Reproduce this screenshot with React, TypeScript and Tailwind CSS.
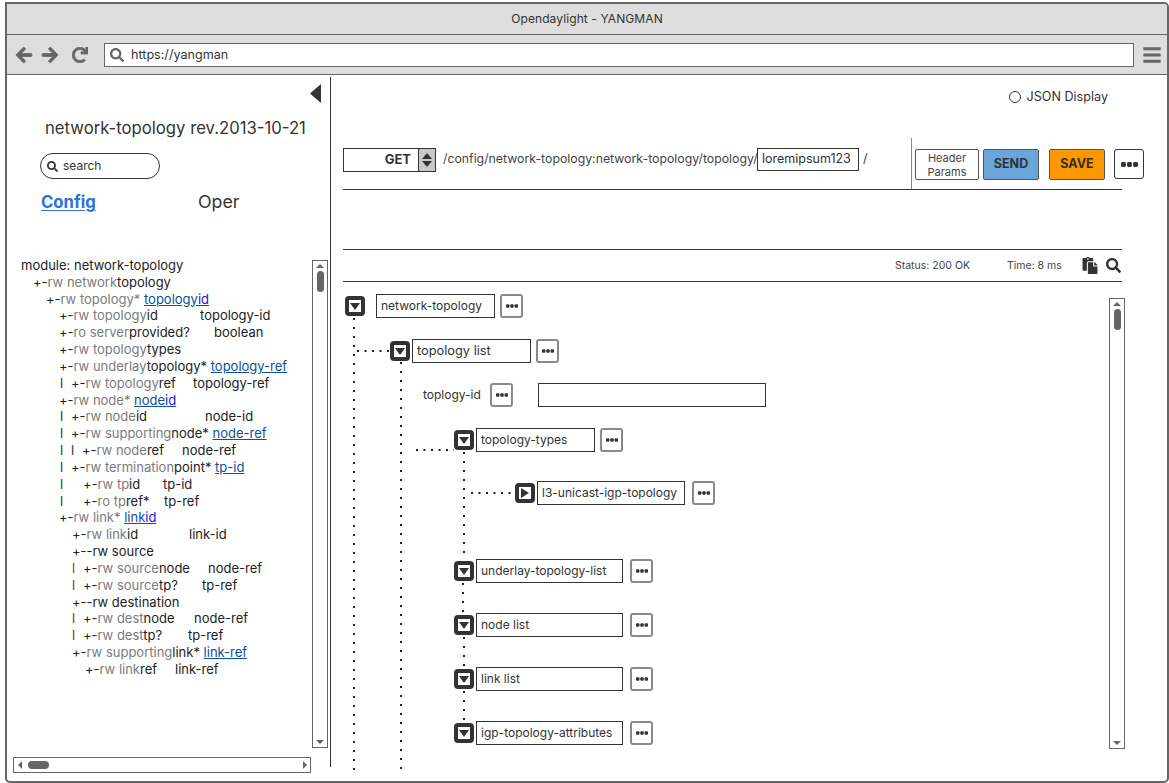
import React from "react";
import { FaArrowLeft, FaArrowRight, FaRedo, FaSearch, FaBars, FaPaste } from "react-icons/fa";

type Part = { t: string; k?: "g" | "b" | "l" | "d" };
type Line = { pad: string; w?: string; pipes?: React.ReactNode; parts: Part[]; col?: string };

const g = (t: string): Part => ({ t, k: "g" });
const b = (t: string): Part => ({ t, k: "b" });
const l = (t: string): Part => ({ t, k: "l" });
const d = (t: string): Part => ({ t, k: "d" });

const P1 = <span className="w-[11px] shrink-0">l</span>;
const P1w = <span className="w-[23px] shrink-0">l</span>;
const P2 = (
  <>
    <span className="w-[11px] shrink-0">l</span>
    <span className="w-[11px] shrink-0">l</span>
  </>
);
const PR = <span className="w-[11px] shrink-0 text-[#8a3030]">l</span>;

const lines: Line[] = [
  { pad: "pl-0", parts: [b("module: network-topology")] },
  { pad: "pl-[12px]", parts: [b("+-"), g("rw network"), b("topology")] },
  { pad: "pl-[25px]", parts: [b("+-"), g("rw topology* "), l("topology"), d("id")] },
  { pad: "pl-[38px]", w: "w-[179px]", parts: [b("+-"), g("rw topology"), b("id")], col: "topology-id" },
  { pad: "pl-[38px]", w: "w-[193px]", parts: [b("+-"), g("ro server"), b("provided?")], col: "boolean" },
  { pad: "pl-[38px]", parts: [b("+-"), g("rw topology"), b("types")] },
  { pad: "pl-[38px]", parts: [b("+-"), g("rw underlay"), b("topology* "), l("topology-ref")] },
  { pad: "pl-[39px]", w: "w-[172px]", pipes: P1, parts: [b("+-"), g("rw topology"), b("ref")], col: "topology-ref" },
  { pad: "pl-[38px]", parts: [b("+-"), g("rw node* "), l("node"), d("id")] },
  { pad: "pl-[39px]", w: "w-[184px]", pipes: P1, parts: [b("+-"), g("rw node"), b("id")], col: "node-id" },
  { pad: "pl-[39px]", pipes: P1, parts: [b("+-"), g("rw supporting"), b("node* "), l("node-ref")] },
  { pad: "pl-[39px]", w: "w-[161px]", pipes: P2, parts: [b("+-"), g("rw node"), b("ref")], col: "node-ref" },
  { pad: "pl-[39px]", pipes: P1, parts: [b("+-"), g("rw termination"), b("point* "), l("tp-id")] },
  { pad: "pl-[39px]", w: "w-[142px]", pipes: P1w, parts: [b("+-"), g("rw tp"), b("id")], col: "tp-id" },
  { pad: "pl-[39px]", w: "w-[143px]", pipes: P1w, parts: [b("+-"), g("ro tp"), b("ref*")], col: "tp-ref" },
  { pad: "pl-[38px]", parts: [b("+-"), g("rw link* "), l("link"), d("id")] },
  { pad: "pl-[51px]", w: "w-[168px]", parts: [b("+-"), g("rw link"), b("id")], col: "link-id" },
  { pad: "pl-[51px]", parts: [b("+--rw source")] },
  { pad: "pl-[51px]", w: "w-[187px]", pipes: PR, parts: [b("+-"), g("rw source"), b("node")], col: "node-ref" },
  { pad: "pl-[51px]", w: "w-[181px]", pipes: PR, parts: [b("+-"), g("rw source"), b("tp?")], col: "tp-ref" },
  { pad: "pl-[51px]", parts: [b("+--rw destination")] },
  { pad: "pl-[51px]", w: "w-[173px]", pipes: PR, parts: [b("+-"), g("rw dest"), b("node")], col: "node-ref" },
  { pad: "pl-[51px]", w: "w-[167px]", pipes: PR, parts: [b("+-"), g("rw dest"), b("tp?")], col: "tp-ref" },
  { pad: "pl-[51px]", parts: [b("+-"), g("rw supporting"), b("link* "), l("link-ref")] },
  { pad: "pl-[64px]", w: "w-[154px]", parts: [b("+-"), g("rw link"), b("ref")], col: "link-ref" },
];

const partCls = {
  g: "text-[#7b7b80]",
  b: "text-[#222]",
  l: "text-[#0e4f9a] underline",
  d: "text-[#1414e6] underline decoration-[#0e4f9a]",
};

function Tri({ dir, cls }: { dir: "up" | "down" | "left" | "right"; cls: string }) {
  const pts = {
    up: "0,10 5,0 10,10",
    down: "0,0 10,0 5,10",
    left: "10,0 10,10 0,5",
    right: "0,0 10,5 0,10",
  }[dir];
  return (
    <svg viewBox="0 0 10 10" preserveAspectRatio="none" className={cls}>
      <polygon points={pts} fill="currentColor" />
    </svg>
  );
}

function Dots({ cls }: { cls: string }) {
  return (
    <svg viewBox="0 0 14 4" className={cls}>
      <rect x="0" y="0" width="4" height="4" rx="1.2" fill="currentColor" />
      <rect x="5" y="0" width="4" height="4" rx="1.2" fill="currentColor" />
      <rect x="10" y="0" width="4" height="4" rx="1.2" fill="currentColor" />
    </svg>
  );
}

function More({ cls = "" }: { cls?: string }) {
  return (
    <div className={`w-[23px] h-[24px] shrink-0 rounded-[3px] border-2 border-[#8a8a8a] bg-white flex items-center justify-center text-[#333] ${cls}`}>
      <Dots cls="w-[12px] h-[4px]" />
    </div>
  );
}

function Toggle({ dir = "down" }: { dir?: "down" | "right" }) {
  return (
    <div className="w-[20px] h-[20px] shrink-0 rounded-[4px] border-4 border-[#333] bg-white flex items-center justify-center text-[#333]">
      {dir === "down" ? <Tri dir="down" cls="w-[10px] h-[7px]" /> : <Tri dir="right" cls="w-[8px] h-[10px]" />}
    </div>
  );
}

function Node({ row, input, text, dir, gapA = "ml-[2px]", gapB = "ml-[7px]", size = "text-[12px]" }: { row: string; input: string; text: string; dir?: "down" | "right"; gapA?: string; gapB?: string; size?: string }) {
  return (
    <div className={`flex items-center h-[24px] shrink-0 ${row}`}>
      <Toggle dir={dir} />
      <div className={`${gapA} ${input} h-[24px] border border-[#333] bg-white pl-[4px] flex items-center ${size} text-[#333] whitespace-nowrap`}>{text}</div>
      <More cls={gapB} />
    </div>
  );
}

function VScroll({ cls, up = "mt-[3px]" }: { cls: string; up?: string }) {
  return (
    <div className={`${cls} w-[16px] shrink-0 border border-[#666] bg-white flex flex-col items-center text-[#666]`}>
      <Tri dir="up" cls={`w-[8px] h-[4px] ${up}`} />
      <div className="w-[7px] h-[21px] mt-[3px] rounded-full bg-[#666]" />
      <div className="flex-1" />
      <Tri dir="down" cls="w-[8px] h-[4px] mb-[3px]" />
    </div>
  );
}

export default function App() {
  return (
    <div className="w-[1169px] h-[783px] bg-white pt-[2px] pl-[5px] overflow-hidden font-['Inter',sans-serif] text-[#333]">
      <div className="w-[1164px] h-[781px] border-2 border-[#666] rounded-tr-[5px] rounded-br-[5px] rounded-bl-[5px] overflow-hidden flex flex-col bg-white">
        <div className="h-[31px] shrink-0 bg-[#dedede] border-b border-[#666] flex items-center justify-center text-[12px] text-[#333] tracking-[0.1px]">
          Opendaylight - YANGMAN
        </div>
        <div className="h-[40px] shrink-0 bg-[#dedede] border-b border-[#666] flex items-center text-[#666]">
          <FaArrowLeft className="ml-[8px] w-[18px] h-[18px]" stroke="currentColor" strokeWidth={25} />
          <FaArrowRight className="ml-[8px] w-[18px] h-[18px]" stroke="currentColor" strokeWidth={25} />
          <FaRedo className="ml-[13px] w-[16px] h-[16px]" stroke="currentColor" strokeWidth={25} />
          <div className="ml-[16px] w-[1030px] h-[24px] border border-[#666] bg-white flex items-center pl-[5px]">
            <FaSearch className="w-[14px] h-[14px] text-[#666]" />
            <span className="ml-[7px] mt-[1px] text-[12.6px] text-[#333]">https://yangman</span>
          </div>
          <FaBars className="ml-[9px] w-[18px] h-[20px] text-[#666]" />
        </div>

        <div className="flex flex-1 min-h-0">
          <div className="w-[324px] h-[690px] mt-[2px] shrink-0 border-r border-[#333] flex flex-col">
            <div className="h-[41px] shrink-0 flex justify-end pr-[9px] pt-[7px] text-[#333]">
              <Tri dir="left" cls="w-[11px] h-[19px]" />
            </div>
            <div className="h-[20px] shrink-0 ml-[38px] pt-[2px] flex items-center text-[16.7px] text-[#333] whitespace-nowrap">network-topology rev.2013-10-21</div>
            <div className="ml-[33px] mt-[15px] w-[120px] h-[26px] shrink-0 rounded-full border border-[#333] bg-white flex items-center pl-[6px]">
              <FaSearch className="w-[11px] h-[11px] text-[#333]" />
              <span className="ml-[5px] text-[12px] text-[#333]">search</span>
            </div>
            <div className="mt-[11px] h-[24px] shrink-0 flex items-center">
              <span className="ml-[34px] w-[157px] pt-[1px] text-[16.7px] font-bold text-[#2a73d9] underline underline-offset-2">Config</span>
              <span className="text-[17.8px] text-[#333]">Oper</span>
            </div>
            <div className="mt-[43px] h-[491px] shrink-0 flex">
              <div className="w-[305px] shrink-0 pl-[14px] text-[13px] leading-[16.83px]">
                {lines.map((ln, i) => (
                  <div key={i} className="flex h-[16.83px] whitespace-pre">
                    <span className={`flex shrink-0 ${ln.pad} ${ln.w ?? ""}`}>
                      {ln.pipes}
                      <span>
                        {ln.parts.map((p, j) => (
                          <span key={j} className={partCls[p.k ?? "b"]}>{p.t}</span>
                        ))}
                      </span>
                    </span>
                    {ln.col && <span className="text-[#222]">{ln.col}</span>}
                  </div>
                ))}
              </div>
              <VScroll cls="mt-[3px] h-[488px]" />
            </div>
            <div className="mt-[9px] ml-[6px] w-[298px] h-[16px] shrink-0 border border-[#666] flex items-center text-[#666] pl-[4px] pr-[3px]">
              <Tri dir="left" cls="w-[4px] h-[8px]" />
              <div className="ml-[6px] w-[21px] h-[8px] rounded-full bg-[#666]" />
              <div className="flex-1" />
              <Tri dir="right" cls="w-[4px] h-[8px]" />
            </div>
          </div>

          <div className="flex-1 min-w-0 flex flex-col">
            <div className="h-[63px] shrink-0 flex justify-end pr-[59px] pt-[15px]">
              <div className="flex items-center h-[14px] text-[12.6px] text-[#333]">
                <span className="w-[12px] h-[12px] rounded-full border border-[#333] bg-white" />
                <span className="ml-[6px]">JSON Display</span>
              </div>
            </div>

            <div className="ml-[12px] w-[801px] h-[51px] shrink-0 flex items-start text-[#333]">
              <div className="mt-[10px] w-[93px] h-[24px] border border-[#333] flex">
                <span className="w-[74px] h-full pr-[7px] pb-[1px] flex items-center justify-end font-bold text-[13px] text-[#333]">GET</span>
                <span className="flex-1 bg-[#c8c8c8] border-l border-[#333] flex flex-col items-center justify-center gap-[2px] text-[#333]">
                  <Tri dir="up" cls="w-[10px] h-[6px]" />
                  <Tri dir="down" cls="w-[10px] h-[6px]" />
                </span>
              </div>
              <span className="mt-[12px] ml-[7px] w-[314px] text-[12.3px] whitespace-nowrap text-[#444]">/config/network-topology:network-topology/topology/</span>
              <div className="mt-[10px] w-[102px] h-[23px] border border-[#333] flex items-center pl-[4px] text-[12.5px]">loremipsum123</div>
              <span className="mt-[12px] ml-[4px] w-[48px] text-[12.5px]">/</span>
              <div className="w-px h-[52px] bg-[#888] shrink-0" />
              <div className="mt-[11px] ml-[3px] w-[64px] h-[31px] border border-[#555] rounded-[2px] flex flex-col items-center justify-center text-[11px] leading-[14px] text-[#444]">
                <span>Header</span>
                <span>Params</span>
              </div>
              <div className="mt-[11px] ml-[4px] w-[56px] h-[31px] border border-[#555] rounded-[2px] bg-[#6ca5d9] flex items-center justify-center font-bold text-[12.5px] text-[#2b3440]">SEND</div>
              <div className="mt-[11px] ml-[10px] w-[56px] h-[31px] border border-[#555] rounded-[2px] bg-[#ff9800] flex items-center justify-center font-bold text-[12.5px] text-[#3a2b10]">SAVE</div>
              <div className="mt-[11px] ml-[9px] w-[30px] h-[30px] border border-[#333] rounded-[3px] bg-white flex items-center justify-center text-[#333]">
                <Dots cls="w-[17px] h-[5px]" />
              </div>
            </div>
            <div className="ml-[12px] w-[779px] h-px shrink-0 bg-[#333]" />
            <div className="h-[59px] shrink-0" />
            <div className="ml-[12px] w-[779px] h-px shrink-0 bg-[#333]" />
            <div className="ml-[12px] w-[779px] h-[31px] shrink-0 flex items-center text-[10.5px] text-[#444]">
              <span className="ml-[552px] w-[112px]">Status: 200 OK</span>
              <span className="w-[75px]">Time: 8 ms</span>
              <FaPaste className="w-[16px] h-[17px] text-[#333]" />
              <FaSearch className="ml-[8px] w-[15px] h-[15px] text-[#333]" />
            </div>
            <div className="ml-[12px] w-[779px] h-px shrink-0 bg-[#333]" />

            <div className="relative flex-1 min-h-0 ml-[12px] flex overflow-hidden">
              <div className="w-[766px] shrink-0 flex flex-col">
                <Node row="mt-[12px] ml-[2px]" input="w-[119px]" text="network-topology" gapA="ml-[11px]" gapB="ml-[5px]" />
                <Node row="mt-[21px] ml-[47px]" input="w-[119px]" text="topology list" gapB="ml-[5px]" size="text-[12.8px]" />
                <div className="mt-[20px] ml-[80px] h-[24px] shrink-0 flex items-center text-[12px] text-[#333]">
                  <span className="w-[67px] whitespace-nowrap">toplogy-id</span>
                  <More />
                  <div className="ml-[25px] w-[228px] h-[24px] border border-[#333] bg-white" />
                </div>
                <Node row="mt-[21px] ml-[111px]" input="w-[119px]" text="topology-types" gapB="ml-[5px]" />
                <Node row="mt-[29px] ml-[172px]" input="w-[148px]" text="l3-unicast-igp-topology" dir="right" />
                <Node row="mt-[54px] ml-[111px]" input="w-[147px]" text="underlay-topology-list" />
                <Node row="mt-[30px] ml-[111px]" input="w-[147px]" text="node list" />
                <Node row="mt-[30px] ml-[111px]" input="w-[147px]" text="link list" />
                <Node row="mt-[30px] ml-[111px]" input="w-[147px]" text="igp-topology-attributes" />
              </div>
              <VScroll cls="mt-[16px] h-[451px]" />
              <svg className="absolute left-0 top-0 w-[400px] h-[490px] pointer-events-none text-[#222]" viewBox="0 0 400 490">
                <g stroke="currentColor" strokeWidth="2" fill="none">
                  <line x1="11" y1="36" x2="11" y2="490" strokeDasharray="2 7" />
                  <line x1="58" y1="80" x2="58" y2="490" strokeDasharray="2 7" />
                  <line x1="14" y1="69" x2="47" y2="69" strokeDasharray="2 5.5" />
                  <line x1="73" y1="168" x2="111" y2="168" strokeDasharray="2 5.5" />
                  <line x1="121" y1="170" x2="121" y2="272" strokeDasharray="2 7" />
                  <line x1="128" y1="211" x2="172" y2="211" strokeDasharray="2 5.5" />
                  <line x1="120" y1="301" x2="120" y2="332" strokeDasharray="2 7" />
                  <line x1="121" y1="355" x2="121" y2="386" strokeDasharray="2 7" />
                  <line x1="121" y1="409" x2="121" y2="440" strokeDasharray="2 7" />
                </g>
              </svg>
            </div>
          </div>
        </div>
      </div>
    </div>
  );
}
